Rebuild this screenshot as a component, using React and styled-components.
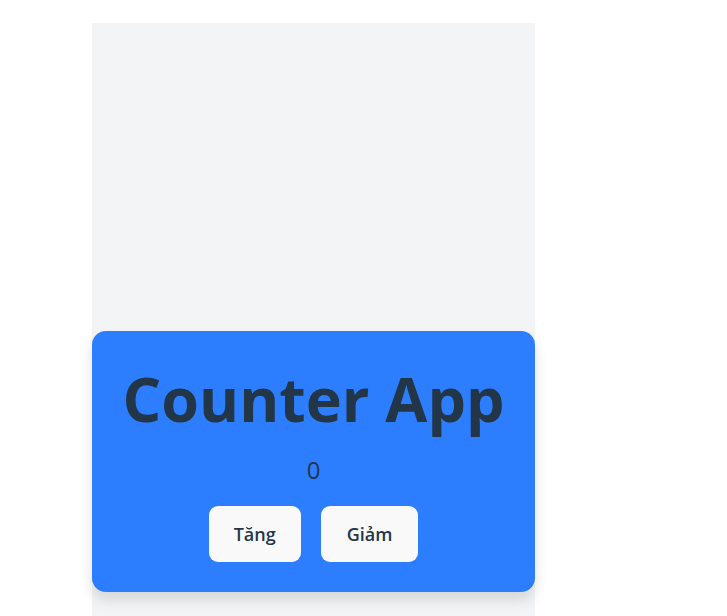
import React, { useState } from 'react';
import styled, { createGlobalStyle } from 'styled-components';

const GlobalStyle = createGlobalStyle`
  html, body {
    margin: 0;
    padding: 0;
    background: #ffffff;
    overflow: hidden;
  }
  body {
    font-family: "Open Sans", "Noto Sans", sans-serif;
  }
`;

const Page = styled.div`
  padding: 23px 0 0 92px;
`;

const Screen = styled.main`
  width: 443px;
  min-height: calc(100vh - 23px);
  background: #f3f4f6;
  padding-top: 308px;
  box-sizing: border-box;
`;

const Card = styled.section`
  background: #2d7dff;
  border-radius: 14px;
  box-shadow: 0 8px 14px rgba(0, 0, 0, 0.12);
  padding: 37px 16px 30px;
  display: flex;
  flex-direction: column;
  align-items: center;
  color: #233648;
`;

const Title = styled.h1`
  margin: 0;
  font-size: 61px;
  font-weight: 700;
  line-height: 61px;
  white-space: nowrap;
`;

const Count = styled.p`
  margin: 25px 0 0;
  font-size: 24px;
  line-height: 32px;
`;

const Actions = styled.div`
  display: flex;
  gap: 20px;
  margin-top: 20px;
`;

const Button = styled.button`
  border: none;
  background: #f9f9f9;
  color: #233648;
  border-radius: 9px;
  height: 56px;
  padding: 0 ${p => p.$pad || 25}px;
  font-family: inherit;
  font-size: 18px;
  font-weight: 600;
  cursor: pointer;
`;

export default function App() {
  const [count, setCount] = useState(0);
  return (
    <>
      <GlobalStyle />
      <Page>
        <Screen>
          <Card>
            <Title>Counter App</Title>
            <Count>{count}</Count>
            <Actions>
              <Button onClick={() => setCount(count + 1)}>Tăng</Button>
              <Button $pad={26} onClick={() => setCount(count - 1)}>Giảm</Button>
            </Actions>
          </Card>
        </Screen>
      </Page>
    </>
  );
}
